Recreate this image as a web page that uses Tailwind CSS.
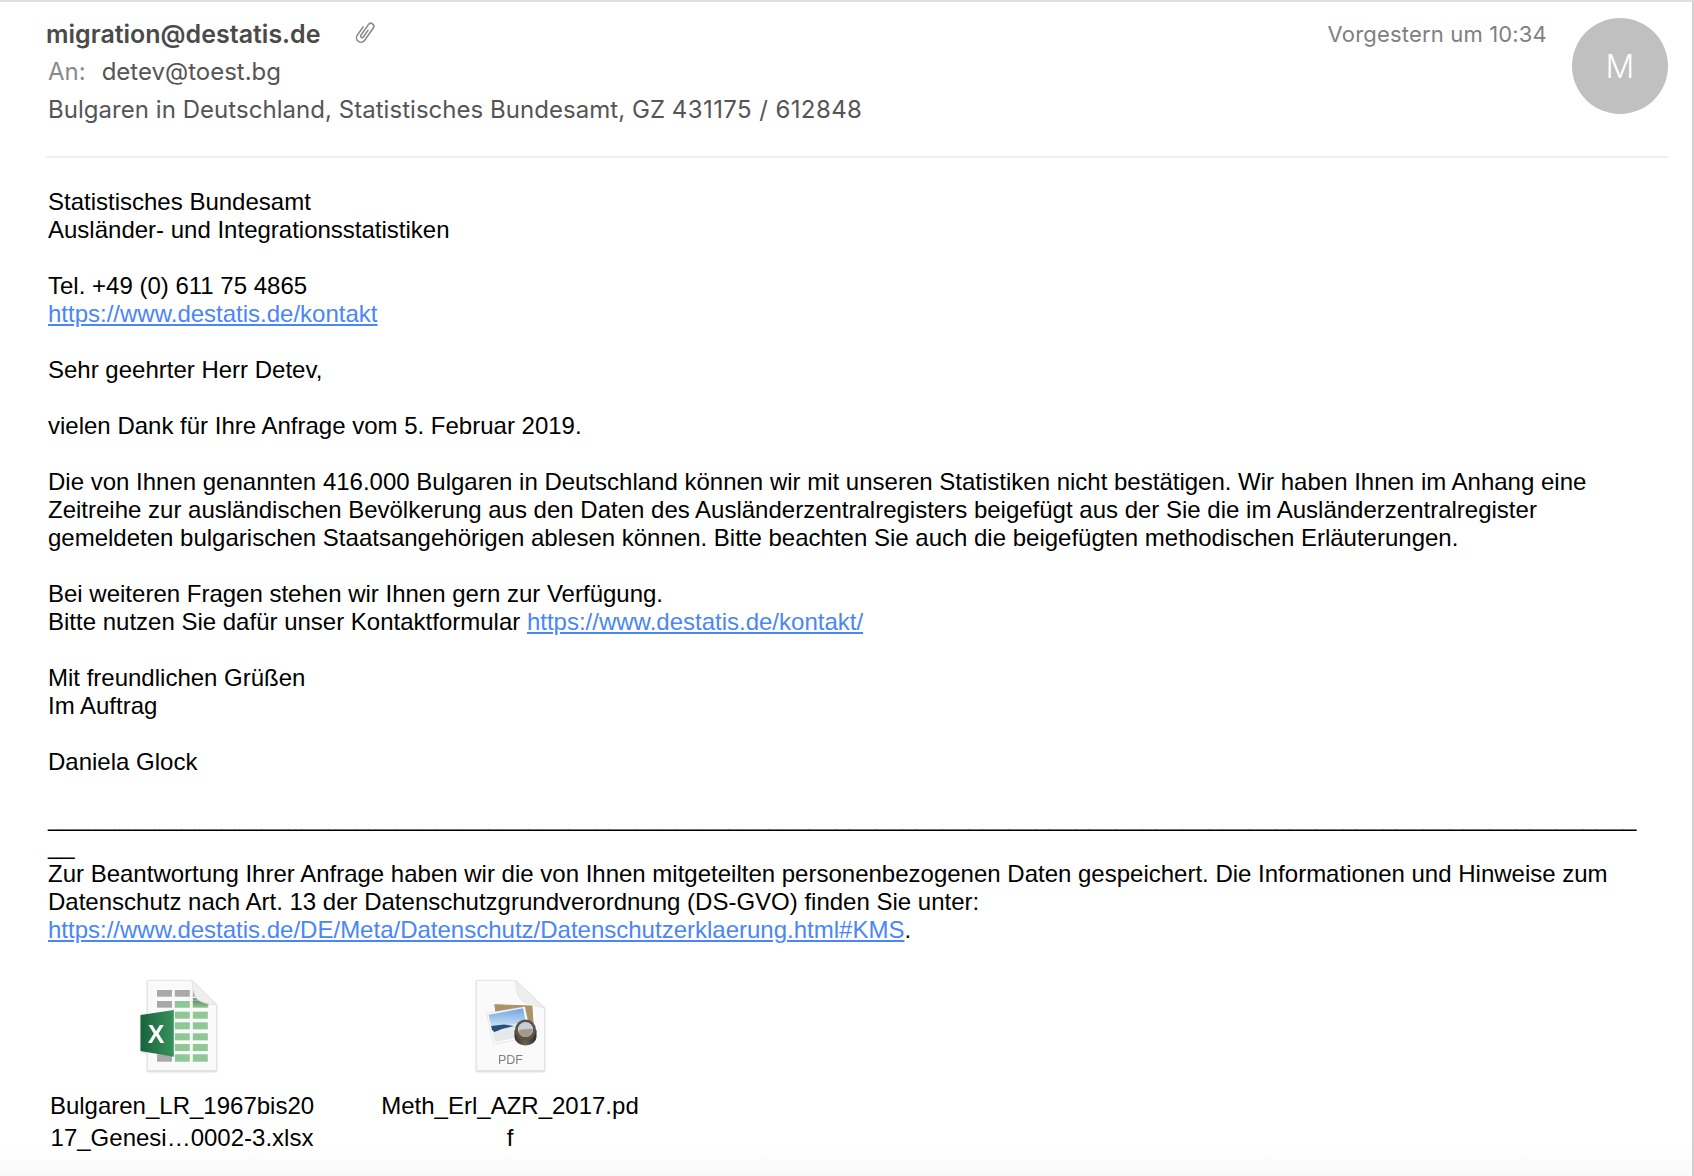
<!DOCTYPE html>
<html lang="de">
<head>
  <meta charset="UTF-8">
  <title>migration@destatis.de</title>
  <script src="https://cdn.jsdelivr.net/npm/@tailwindcss/browser@4"></script>
</head>
<body class="bg-white">
  <div class="h-[1176px] overflow-hidden border-t-2 border-r-2 border-t-[#dde0e4] border-r-[#cfcfcf] bg-gradient-to-b from-white from-[97.5%] to-[#f9f9f9] font-['Liberation_Sans',sans-serif]">

    <!-- Header -->
    <header class="mx-[24px] ml-[46px] flex h-[156px] border-b-2 border-[#ebeef3] pt-[13px] font-['Inter',sans-serif]">
      <div class="flex-1 text-[24px] leading-[38px] text-[#555]">
        <div class="flex items-center">
          <span class="text-[25px] font-semibold text-[#4a4a4a]">migration@destatis.de</span>
          <svg class="ml-[33px] -translate-y-[2px]" width="24" height="24" viewBox="-12 -12 24 24" fill="none" stroke="#8c8c8c" stroke-width="1.6" stroke-linecap="round">
            <path transform="rotate(35)" d="M-4.5 -3V7a4.5 4.5 0 0 0 9 0V-8a3 3 0 0 0 -6 0V5a1.5 1.5 0 0 0 3 0V-3"/>
          </svg>
        </div>
        <div class="pl-[2px]"><span class="text-[#8a8a8a]">An:</span><span class="ml-[16px]">detev@toest.bg</span></div>
        <div class="pl-[2px] tracking-[0.04px]">Bulgaren in Deutschland, Statistisches Bundesamt, GZ <span class="tracking-[0.4px]">431175 / 612848</span></div>
      </div>
      <div class="text-[22px] leading-[38px] tracking-[0.17px] text-[#808080]">Vorgestern um 10:34</div>
      <div class="ml-[25px] mt-[3px] flex size-[96px] items-center justify-center rounded-full bg-[#c0c0c0] pt-[2px] text-[32px] font-light text-white">M</div>
    </header>

    <!-- Message body -->
    <div class="ml-[48px] mt-[30px] w-[1595px] text-[24px] leading-[28px] text-black [overflow-wrap:anywhere]">
      Statistisches Bundesamt<br>
      Ausländer- und Integrationsstatistiken<br>
      <br>
      Tel. +49 (0) 611 75 4865<br>
      <a href="#" class="text-[#4a86f7] underline">https://www.destatis.de/kontakt</a><br>
      <br>
      Sehr geehrter Herr Detev,<br>
      <br>
      vielen Dank für Ihre Anfrage vom 5. Februar 2019.<br>
      <br>
      Die von Ihnen genannten 416.000 Bulgaren in Deutschland können wir mit unseren Statistiken nicht bestätigen. Wir haben Ihnen im Anhang eine Zeitreihe zur ausländischen Bevölkerung aus den Daten des Ausländerzentralregisters beigefügt aus der Sie die im Ausländerzentralregister gemeldeten bulgarischen Staatsangehörigen ablesen können. Bitte beachten Sie auch die beigefügten methodischen Erläuterungen.<br>
      <br>
      Bei weiteren Fragen stehen wir Ihnen gern zur Verfügung.<br>
      Bitte nutzen Sie dafür unser Kontaktformular <a href="#" class="text-[#4a86f7] underline">https://www.destatis.de/kontakt/</a><br>
      <br>
      Mit freundlichen Grüßen<br>
      Im Auftrag<br>
      <br>
      Daniela Glock<br>
      <br>
      _________________________________________________________________________________________________________________________<br>
      Zur Beantwortung Ihrer Anfrage haben wir die von Ihnen mitgeteilten personenbezogenen Daten gespeichert. Die Informationen und Hinweise zum Datenschutz nach Art. 13 der Datenschutzgrundverordnung (DS-GVO) finden Sie unter:<br>
      <a href="#" class="text-[#4a86f7] underline">https://www.destatis.de/DE/Meta/Datenschutz/Datenschutzerklaerung.html#KMS</a>.
    </div>

    <!-- Attachments -->
    <div class="ml-[46px] mt-[34px] flex gap-[56px] text-center text-[24px] leading-[32px] text-black">
      <div class="flex w-[272px] flex-col items-center">
        <svg class="drop-shadow-[0_1px_1px_rgba(0,0,0,0.18)]" width="96" height="96" viewBox="0 0 96 96">
          <defs>
            <linearGradient id="xl" x1="0" x2="1" y1="0" y2="0"><stop offset="0" stop-color="#17633a"/><stop offset="1" stop-color="#38925c"/></linearGradient>
            <linearGradient id="fs" x1="0" x2="0" y1="0" y2="1"><stop offset="0" stop-color="#2f5a3a" stop-opacity=".65"/><stop offset="1" stop-color="#2f5a3a" stop-opacity="0"/></linearGradient>
          </defs>
          <path d="M13.5 2.5H58L82.5 27V92.5H13.5Z" fill="#fafafa" stroke="#e2e2e2" stroke-width=".8"/>
          <g fill="#a9a9a9">
            <rect x="23" y="12" width="15" height="6.7"/><rect x="40.8" y="12" width="15" height="6.7"/><rect x="58.8" y="12" width="6" height="6.7"/>
            <rect x="23" y="23" width="15" height="6.7"/><rect x="23" y="76.3" width="15" height="7.4"/>
          </g>
          <g fill="#8fc795">
            <rect x="40.8" y="23" width="15" height="6.7"/><rect x="58.8" y="23" width="15" height="6.7"/>
            <rect x="40.8" y="33.7" width="15" height="7"/><rect x="58.8" y="33.7" width="15" height="7"/>
            <rect x="40.8" y="44.3" width="15" height="7"/><rect x="58.8" y="44.3" width="15" height="7"/>
            <rect x="40.8" y="55.3" width="15" height="7"/><rect x="58.8" y="55.3" width="15" height="7"/>
            <rect x="40.8" y="66" width="15" height="7"/><rect x="58.8" y="66" width="15" height="7"/>
            <rect x="40.8" y="76.3" width="15" height="7.4"/><rect x="58.8" y="76.3" width="15" height="7.4"/>
          </g>
          <path d="M58.8 20H75V30H58.8Z" fill="url(#fs)"/>
          <path d="M58 2.5Q59 18 64 22Q70 26 82.5 27Z" fill="#efefef" stroke="#d8d8d8" stroke-width=".6"/>
          <path d="M6.5 37 39.8 32V78.7L6.5 73Z" fill="url(#xl)"/>
          <text x="22.2" y="65" text-anchor="middle" font-family="Liberation Sans" font-weight="700" font-size="25" fill="#fff">X</text>
        </svg>
        <div class="mt-[16px]">Bulgaren_LR_1967bis20<br>17_Genesi…0002-3.xlsx</div>
      </div>
      <div class="flex w-[272px] flex-col items-center">
        <svg class="drop-shadow-[0_1px_1px_rgba(0,0,0,0.18)]" width="96" height="96" viewBox="0 0 96 96">
          <defs>
            <linearGradient id="sky" x1="0" x2="0" y1="0" y2="1"><stop offset="0" stop-color="#6fa6e6"/><stop offset="1" stop-color="#dbe8f4"/></linearGradient>
            <linearGradient id="barrel" x1="0" x2="1" y1="0" y2="0"><stop offset="0" stop-color="#3a342d"/><stop offset=".5" stop-color="#6a6054"/><stop offset="1" stop-color="#2f2a25"/></linearGradient>
          </defs>
          <path d="M14.5 2.5H53.5L82.5 30V92.5H14.5Z" fill="#fafafa" stroke="#e2e2e2" stroke-width=".8"/>
          <path d="M53.5 2.5Q54 20 62 24Q70 28 82.5 30Z" fill="#eeeeee" stroke="#dddddd" stroke-width=".6"/>
          <!-- preview icon: back frame, photo, magnifier -->
          <path d="M31.5 25.5 71 27 72.5 50 35 50Z" fill="#ab9268" stroke="#fff" stroke-width="1.2"/>
          <path d="M24.5 35.3 62.8 28.7 69.2 58.7 31.8 66.3Z" fill="#fff" stroke="#cfcfcf" stroke-width=".5"/>
          <path d="M26.5 36.7 61.2 30.3 64 45 29.5 51Z" fill="url(#sky)"/>
          <path d="M29.3 50 64 44 67.2 57 33.2 64.3Z" fill="#e4e9ea"/>
          <path d="M29.2 48 42 46.5 52 48 40 51 32.5 54 30 52Z" fill="#24507c"/>
          <path d="M52.5 52H74.5V59a11 8.5 0 0 1 -22 0Z" fill="url(#barrel)"/>
          <circle cx="63.5" cy="52" r="10.5" fill="#5b544b"/>
          <circle cx="63.5" cy="51.5" r="7.6" fill="#c6cfd4"/>
          <path d="M56.5 53C60 50 66 52 70.8 50.5 70 56 67 59 63.5 59 60 59 57.5 57 56.5 53Z" fill="#a49a88"/>
          <text x="48.5" y="86.3" text-anchor="middle" font-family="Liberation Sans" font-size="12.5" fill="#808080">PDF</text>
        </svg>
        <div class="mt-[16px]">Meth_Erl_AZR_2017.pd<br>f</div>
      </div>
    </div>
  </div>
</body>
</html>
